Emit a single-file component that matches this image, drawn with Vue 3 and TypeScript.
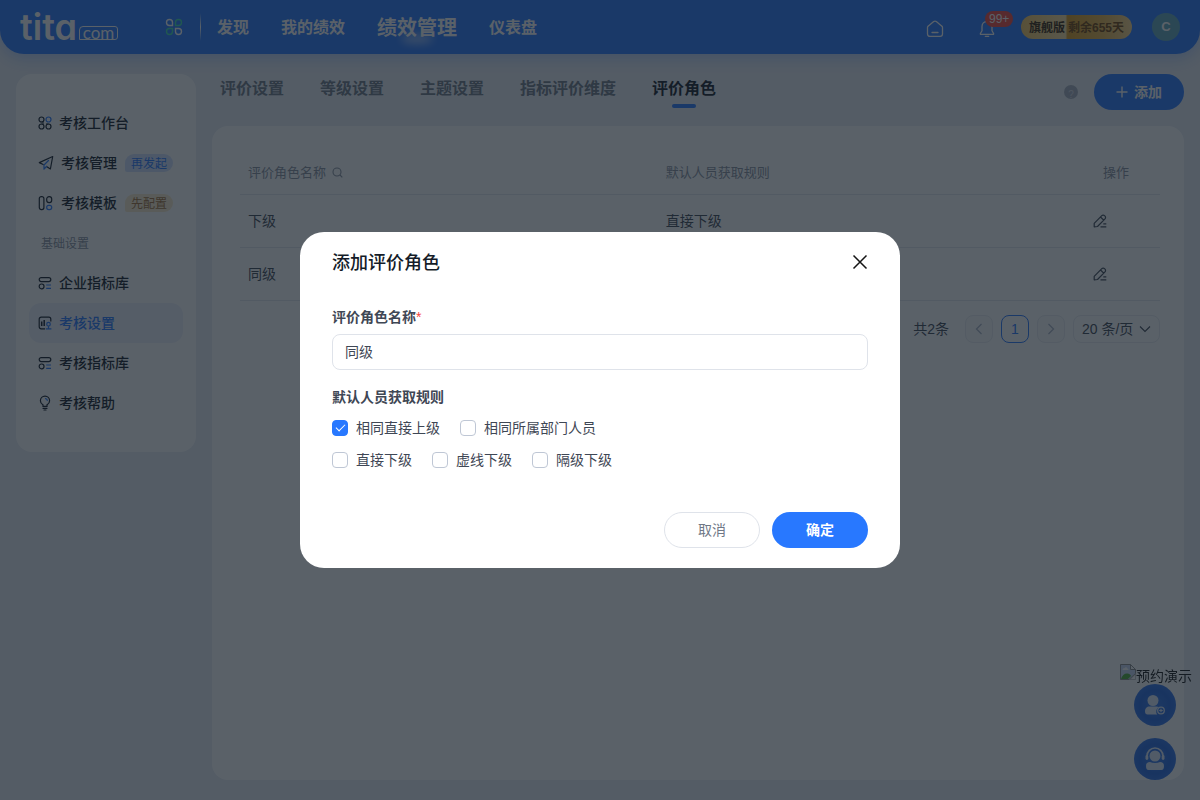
<script setup lang="ts">
import { ref } from 'vue'

interface MenuItem {
  label: string
  icon: string
  tag?: string
  tone?: string
  active?: boolean
}

const navLinks = ['发现', '我的绩效', '绩效管理', '仪表盘']
const activeNav = '绩效管理'

const topMenu: MenuItem[] = [
  { label: '考核工作台', icon: 'grid' },
  { label: '考核管理', icon: 'plane', tag: '再发起', tone: 'blue' },
  { label: '考核模板', icon: 'board', tag: '先配置', tone: 'gold' },
]
const baseMenu: MenuItem[] = [
  { label: '企业指标库', icon: 'library' },
  { label: '考核设置', icon: 'setting', active: true },
  { label: '考核指标库', icon: 'library' },
  { label: '考核帮助', icon: 'bulb' },
]

const tabs = ['评价设置', '等级设置', '主题设置', '指标评价维度', '评价角色']
const activeTab = ref('评价角色')

const rows = [
  { name: '下级', rule: '直接下级' },
  { name: '同级', rule: '' },
]

const roleName = ref('同级')
const ruleGroups = ref([
  [
    { label: '相同直接上级', checked: true },
    { label: '相同所属部门人员', checked: false },
  ],
  [
    { label: '直接下级', checked: false },
    { label: '虚线下级', checked: false },
    { label: '隔级下级', checked: false },
  ],
])
const pageSize = ref('20')
</script>

<template>
  <div class="page">
    <header class="header">
      <a class="logo" href="#" aria-label="tita.com"><span class="logo-name">tita</span><span class="logo-com">com</span></a>
      <button class="apps" type="button" aria-label="应用">
        <svg width="18" height="18" viewBox="0 0 18 18" fill="none" stroke-width="1.4">
          <path d="M4.5 1.5a3 3 0 0 0 0 6h3v-3A3 3 0 0 0 4.500 1.500Z" stroke="#fff" />
          <path d="M13.500 1.500a3 3 0 0 1 0 6h-3v-3A3 3 0 0 1 13.500 1.500Z" stroke="#3fe0b0" />
          <path d="M4.500 16.500a3 3 0 0 1 0-6h3v3A3 3 0 0 1 4.500 16.500Z" stroke="#3fe0b0" />
          <path d="M13.500 16.500a3 3 0 0 0 0-6h-3v3A3 3 0 0 0 13.500 16.500Z" stroke="#fff" />
        </svg>
      </button>
      <span class="divider"></span>
      <nav class="nav">
        <a v-for="n in navLinks" :key="n" href="#" :class="{ current: n === activeNav }">{{ n }}</a>
      </nav>
      <div class="tools">
        <button class="tool home" type="button" aria-label="首页">
          <svg width="18" height="18" viewBox="0 0 18 18" fill="none" stroke="#fff" stroke-width="1.3" stroke-linecap="round" stroke-linejoin="round">
            <path d="M1.500 7.600c0-.7.3-1.300.9-1.700l5.300-4.300c.8-.6 1.800-.6 2.600 0l5.300 4.300c.6.4.9 1 .9 1.700v6.400c0 1.400-1 2.400-2.400 2.400H3.900c-1.400 0-2.400-1-2.400-2.400Z" />
            <path d="M6 12.500h6" />
          </svg>
        </button>
        <button class="tool bell" type="button" aria-label="通知">
          <svg width="16" height="18" viewBox="0 0 16 18" fill="none" stroke="#fff" stroke-width="1.3" stroke-linecap="round" stroke-linejoin="round">
            <path d="M8 1.500c-3 0-5 2.200-5 5v4.200l-1.600 2.800c-.2.400 0 .8.500.8h12.200c.5 0 .7-.4.5-.8L13 10.700V6.500c0-2.800-2-5-5-5Z" />
            <path d="M6.300 16.300h3.400" />
          </svg>
          <span class="count">99+</span>
        </button>
        <div class="plan"><span>旗舰版</span><span class="left">剩余655天</span></div>
        <button class="avatar" type="button">C</button>
      </div>
    </header>

    <div class="body">
      <aside class="side">
        <nav>
          <template v-for="(group, gi) in [topMenu, baseMenu]" :key="gi">
            <p v-if="gi === 1" class="caption">基础设置</p>
            <a v-for="m in group" :key="m.label" href="#" class="item" :class="{ active: m.active }">
              <svg v-if="m.icon === 'grid'" width="14" height="14" viewBox="0 0 14 14" fill="none" stroke="#141c28" stroke-width="1.200">
                <circle cx="3.500" cy="3.500" r="2.500" />
                <circle cx="3.500" cy="10.500" r="2.500" />
                <circle cx="10.500" cy="10.500" r="2.500" />
                <path d="M3.500 6H6M3.500 8H6M8 8h2.500" />
                <circle cx="10.500" cy="3.500" r="2.500" stroke="#2878ff" />
              </svg>
              <svg v-else-if="m.icon === 'plane'" width="16" height="16" viewBox="0 0 16 16" fill="none" stroke="#141c28" stroke-width="1.200" stroke-linejoin="round" stroke-linecap="round">
                <path d="M5.200 9.500 1.300 7.600 14.700 1.500 12.400 14 8.500 11.500" />
                <path d="M10.500 5.500 6 10v4.200l2.500-2.700" stroke="#2878ff" />
              </svg>
              <svg v-else-if="m.icon === 'board'" width="16" height="16" viewBox="0 0 16 16" fill="none" stroke="#141c28" stroke-width="1.200">
                <rect x="1.300" y="1.600" width="4.600" height="13" rx="2" />
                <rect x="8.700" y="1.600" width="5" height="6" rx="2.400" />
                <rect x="8.700" y="10.300" width="5" height="4.300" rx="2" stroke="#2878ff" />
              </svg>
              <svg v-else-if="m.icon === 'library'" width="14" height="14" viewBox="0 0 14 14" fill="none" stroke="#141c28" stroke-width="1.200">
                <rect x="1.200" y="1.600" width="11.600" height="4" rx="2" />
                <rect x="1.200" y="8" width="4.800" height="4.800" rx="2.200" />
                <path d="M8.200 9H13M8.200 12.300H13" stroke="#2878ff" />
              </svg>
              <svg v-else-if="m.icon === 'setting'" width="14" height="14" viewBox="0 0 14 14" fill="none" stroke="#141c28" stroke-width="1.200">
                <path d="M7 12.800H3.200a2 2 0 0 1-2-2V3.200a2 2 0 0 1 2-2h7.600a2 2 0 0 1 2 2V5.500" />
                <path d="M3.700 5.500V10M6.200 4V10" stroke-width="1.500" />
                <circle cx="10.500" cy="8.200" r="1.800" stroke="#2878ff" />
                <path d="M10.500 10V12.700M7.800 12.900H13.400" stroke="#2878ff" />
              </svg>
              <svg v-else width="14" height="16" viewBox="0 0 14 16" fill="none" stroke="#141c28" stroke-width="1.200" stroke-linecap="round">
                <path d="M5 11.300V9.900C3.300 9 2.400 7.600 2.400 5.800a4.600 4.600 0 0 1 9.200 0C11.600 7.600 10.700 9 9 9.900v1.400ZM5 13.300h4M6 15h2" />
                <path d="M7.500 3.600c1 .1 1.700.8 1.800 1.800" stroke="#2878ff" />
              </svg>
              <span>{{ m.label }}</span>
              <em v-if="m.tag" :class="m.tone">{{ m.tag }}</em>
            </a>
          </template>
        </nav>
      </aside>

      <main class="main">
        <div class="bar">
          <div class="tabs" role="tablist">
            <button v-for="t in tabs" :key="t" type="button" role="tab" :aria-selected="t === activeTab" :class="{ on: t === activeTab }" @click="activeTab = t">{{ t }}</button>
          </div>
          <button class="help" type="button" aria-label="帮助">?</button>
          <button class="add" type="button">
            <svg width="12" height="12" viewBox="0 0 12 12" stroke="#fff" stroke-width="1.400"><path d="M6 0.500v11M0.500 6h11" /></svg>
            添加
          </button>
        </div>

        <section class="card">
          <table>
            <thead>
              <tr>
                <th class="c-name">
                  <div>
                    <span>评价角色名称</span>
                    <svg width="11" height="11" viewBox="0 0 11 11" fill="none" stroke="#89919f" stroke-width="1.100"><circle cx="5" cy="5" r="4" /><path d="m8 8 2.300 2.300" /></svg>
                  </div>
                </th>
                <th>默认人员获取规则</th>
                <th class="c-op">操作</th>
              </tr>
            </thead>
            <tbody>
              <tr v-for="r in rows" :key="r.name">
                <td>{{ r.name }}</td>
                <td>{{ r.rule }}</td>
                <td class="op">
                  <button type="button" aria-label="编辑">
                    <svg width="14" height="14" viewBox="0 0 14 14" fill="none" stroke="#3f4755" stroke-width="1.200" stroke-linejoin="round">
                      <path d="M1.200 12.800V9.300L8.800 1.700a1.900 1.900 0 0 1 2.700 0l.5.500a1.900 1.900 0 0 1 0 2.700L4.500 12.500ZM7.500 3l3.200 3.200M10.300 9.800H13.300M7.500 12.800H13.300" />
                    </svg>
                  </button>
                </td>
              </tr>
            </tbody>
          </table>
          <div class="pager">
            <span class="total">共2条</span>
            <button type="button" disabled aria-label="上一页"><svg width="12" height="12" viewBox="0 0 12 12" fill="none" stroke="#a9b2c2" stroke-width="1.200"><path d="M8.500 1 3.500 6l5 5" /></svg></button>
            <button type="button" class="cur">1</button>
            <button type="button" disabled aria-label="下一页"><svg width="12" height="12" viewBox="0 0 12 12" fill="none" stroke="#a9b2c2" stroke-width="1.200"><path d="m3.500 1 5 5-5 5" /></svg></button>
            <label class="size">
              <select v-model="pageSize" aria-label="每页条数"><option value="20">20 条/页</option><option value="50">50 条/页</option></select>
              <svg width="12" height="12" viewBox="0 0 12 12" fill="none" stroke="#3f4755" stroke-width="1.100"><path d="m1 3.500 5 5 5-5" /></svg>
            </label>
          </div>
        </section>
      </main>
    </div>

    <div class="float">
      <a class="demo" href="#">
        <svg width="16" height="16" viewBox="0 0 16 16">
          <path d="M.5.500h10l5 5v4L9 15.500H.5Z" fill="#c8d8f4" stroke="#8c8c8c" />
          <path d="M10.500.500v5h5Z" fill="#fff" stroke="#8c8c8c" />
          <path d="M2.500 6c0-1.500 1-2 2-1.800C5 3 7 3 7.200 4.500c1 0 1.300.7 1.300 1.500Z" fill="#fff" />
          <path d="M1 15c1-4 4-6 6.500-5.500 1.500.3 3 1.200 3.500 2.500l-3 3Z" fill="#4fae3a" />
          <path d="M15.500 10v5.500H10Z" fill="#fff" stroke="#a0a0a0" stroke-width=".6" />
        </svg><span>预约演示</span>
      </a>
      <button type="button" aria-label="预约顾问">
        <svg width="22" height="22" viewBox="0 0 22 22" fill="#fff">
          <circle cx="9" cy="6.500" r="5.500" />
          <path d="M1 17.500c0-3.500 2-5 4.500-5h7c.9 0 1.700.2 2.400.6a4.800 4.800 0 0 0-1.600 7.400H3.500C2 20.500 1 19.500 1 17.500Z" />
          <circle cx="17" cy="16.500" r="3.300" fill="none" stroke="#fff" stroke-width="1.300" />
          <path d="M17 14.700v3.600M15.200 16.500h3.600" stroke="#fff" stroke-width="1.200" />
        </svg>
      </button>
      <button type="button" aria-label="在线客服">
        <svg width="22" height="24" viewBox="0 0 22 24" fill="#fff">
          <circle cx="11" cy="9" r="5.500" />
          <path d="M3 10.500V9a8 8 0 0 1 16 0v1.500" fill="none" stroke="#fff" stroke-width="1.700" />
          <rect x="1.500" y="8" width="2.800" height="5" rx="1.400" />
          <rect x="17.700" y="8" width="2.800" height="5" rx="1.400" />
          <path d="M2 19c0-3 1.500-4 4-4 3 1.300 7 1.300 10 0 2.500 0 4 1 4 4 0 2.500-.8 4-2.500 4h-13C2.800 23 2 21.500 2 19Z" />
        </svg>
      </button>
    </div>

    <div class="mask">
      <form class="modal" role="dialog" aria-modal="true" aria-labelledby="dlg-title" @submit.prevent>
        <div class="modal-head">
          <h2 id="dlg-title">添加评价角色</h2>
          <button type="button" class="close" aria-label="关闭">
            <svg width="16" height="16" viewBox="0 0 16 16" stroke="#141414" stroke-width="1.500"><path d="m1.500 1.500 13 13M14.500 1.500l-13 13" /></svg>
          </button>
        </div>
        <label class="field" for="role-name">评价角色名称<i>*</i></label>
        <input id="role-name" v-model="roleName" class="text" type="text" />
        <fieldset>
          <legend class="field">默认人员获取规则</legend>
          <div v-for="(g, i) in ruleGroups" :key="i" class="checks">
            <label v-for="o in g" :key="o.label"><input v-model="o.checked" type="checkbox" /><span>{{ o.label }}</span></label>
          </div>
        </fieldset>
        <div class="foot">
          <button type="button" class="cancel">取消</button>
          <button type="submit" class="ok">确定</button>
        </div>
      </form>
    </div>
  </div>
</template>

<style>
body {
  margin: 0;
}
</style>

<style scoped>
.page,
.page button,
.page input,
.page select {
  font-family: 'Liberation Sans', 'Noto Sans CJK SC', sans-serif;
  line-height: 20px;
}
.page {
  min-height: 100vh;
  display: flex;
  flex-direction: column;
  background: #ebeef6;
  color: #3f4755;
  font-size: 14px;
}
.page *,
.page *::before,
.page *::after {
  box-sizing: border-box;
}
a {
  color: inherit;
  text-decoration: none;
}
button {
  padding: 0;
  border: 0;
  background: none;
  color: inherit;
  font-size: 14px;
  cursor: pointer;
}
svg {
  display: block;
  flex: none;
}

.header {
  display: flex;
  align-items: center;
  height: 54px;
  padding: 0 20px;
  border-radius: 0 0 24px 24px;
  background: #2878ff;
  box-shadow: 0 4px 16px rgba(40, 120, 255, 0.3);
  color: #fff;
}
.logo {
  display: flex;
  align-items: flex-end;
  gap: 2px;
  width: 98px;
}
.logo-name {
  font: 600 36px/32px Inter, sans-serif;
  font-feature-settings: 'cv11';
}
.logo-com {
  display: flex;
  flex: 1;
  align-items: center;
  justify-content: center;
  height: 14px;
  margin-bottom: 3px;
  border: 1px solid #fff;
  border-radius: 4px 3px 3px 0;
  font: 400 17px/12px Lato, sans-serif;
}
.apps {
  margin-left: 47px;
}
.divider {
  width: 1px;
  height: 28px;
  margin: 0 16px 0 17px;
  background: linear-gradient(rgba(255, 255, 255, 0), #fff, rgba(255, 255, 255, 0));
}
.nav {
  display: flex;
  align-items: center;
  gap: 32px;
  padding-top: 2px;
  font-size: 16px;
  font-weight: 700;
  white-space: nowrap;
}
.nav .current {
  position: relative;
  font-size: 20px;
}
.nav .current::after {
  content: '';
  position: absolute;
  left: 24px;
  bottom: -6px;
  width: 32px;
  height: 10px;
  border-radius: 50%;
  background: rgba(255, 255, 255, 0.5);
  filter: blur(4px);
}
.tools {
  display: flex;
  align-items: center;
  margin-left: auto;
}
.home {
  margin: 4px 35px 0 0;
}
.bell {
  position: relative;
  margin: 4px 26px 0 0;
}
.count {
  position: absolute;
  left: 6px;
  top: -9px;
  padding: 0 4px;
  border-radius: 8px;
  background: #f5463d;
  font-size: 12px;
  line-height: 16px;
}
.plan {
  display: flex;
  align-items: center;
  height: 24px;
  padding: 2px 8px 0;
  border-radius: 12px;
  background: linear-gradient(90deg, #f6c65f, #fbdfa0 40%, #dc9a1c 42%, #e8b44c 75%, #fbd58a);
  color: #3a260a;
  font-size: 12px;
  font-weight: 700;
  gap: 3px;
}
.plan .left {
  color: #74440a;
}
.avatar {
  width: 28px;
  height: 28px;
  margin-left: 20px;
  border-radius: 50%;
  background: #63a9bd;
  font-size: 13px;
  font-weight: 700;
}

.body {
  flex: 1;
  display: flex;
  align-items: stretch;
  gap: 16px;
  padding: 20px 16px;
}
.side {
  flex: none;
  align-self: flex-start;
  width: 180px;
  padding: 29px 13px;
  border-radius: 16px;
  background: #fff;
}
.side nav {
  display: flex;
  flex-direction: column;
}
.item {
  display: flex;
  align-items: center;
  gap: 7px;
  height: 40px;
  padding: 0 10px 0 9px;
  border-radius: 12px;
  color: #141c28;
  font-weight: 500;
  white-space: nowrap;
}
.item.active {
  background: #eef0fb;
  color: #2878ff;
}
.item em {
  height: 18px;
  margin-left: auto;
  padding: 0 6px;
  border-radius: 9px 9px 9px 2px;
  font-size: 12px;
  font-style: normal;
  font-weight: 400;
  line-height: 20px;
}
.blue {
  background: #d3e2ff;
  color: #2878ff;
}
.gold {
  background: #fbeccb;
  color: #a3703a;
}
.caption {
  margin: 0;
  padding: 11px 0 9px 12px;
  color: #89919f;
  font-size: 12px;
}

.main {
  flex: 1;
  min-width: 0;
  display: flex;
  flex-direction: column;
  gap: 16px;
}
.bar {
  display: flex;
  align-items: center;
  height: 36px;
  padding-left: 8px;
}
.tabs {
  display: flex;
  align-self: flex-start;
  gap: 36px;
}
.tabs button {
  position: relative;
  height: 28px;
  padding-top: 2px;
  color: #6f7886;
  font-size: 16px;
  font-weight: 700;
  white-space: nowrap;
}
.tabs .on {
  color: #141c28;
}
.tabs .on::after {
  content: '';
  position: absolute;
  left: 20px;
  bottom: -6px;
  width: 24px;
  height: 4px;
  border-radius: 2px;
  background: #2878ff;
}
.help {
  width: 14px;
  height: 14px;
  margin: 0 16px 0 auto;
  border-radius: 50%;
  background: #a9b0bf;
  color: #d5d9e2;
  font-size: 10px;
  line-height: 14px;
}
.add {
  display: flex;
  align-items: center;
  justify-content: center;
  gap: 6px;
  width: 90px;
  height: 36px;
  border-radius: 18px;
  background: #2878ff;
  color: #fff;
  font-weight: 700;
}

.card {
  flex: 1;
  padding: 24px 24px 24px 28px;
  border-radius: 16px;
  background: #fff;
}
table {
  width: 100%;
  border-collapse: collapse;
  table-layout: fixed;
}
th,
td {
  padding: 0 8px;
  border-bottom: 1px solid #e3e7ee;
  text-align: left;
  font-weight: 400;
}
th {
  height: 44px;
  padding-top: 2px;
  color: #89919f;
  font-size: 13px;
}
td {
  height: 53px;
}
.c-name {
  width: 45.4%;
}
.c-name div {
  display: flex;
  align-items: center;
  gap: 6px;
}
.c-op {
  width: 75px;
  padding-left: 18px;
}
.op button {
  display: block;
}
.pager {
  display: flex;
  align-items: center;
  justify-content: flex-end;
  gap: 8px;
  margin-top: 14px;
}
.total {
  margin-right: 8px;
}
.pager button {
  display: flex;
  align-items: center;
  justify-content: center;
  width: 28px;
  height: 28px;
  border: 1px solid #e9ecf0;
  border-radius: 8px;
}
.pager button:disabled {
  background: #fafafc;
}
.pager .cur {
  border-color: #2878ff;
  color: #2878ff;
}
.size {
  display: flex;
  align-items: center;
  height: 28px;
  padding: 0 8px;
  border: 1px solid #e9ecf0;
  border-radius: 8px;
}
select {
  width: 57px;
  padding: 0;
  border: 0;
  appearance: none;
  background: none;
  color: #3f4755;
  font-size: 14px;
}

.float {
  position: fixed;
  right: 8px;
  bottom: 20px;
  display: flex;
  flex-direction: column;
  align-items: flex-end;
  gap: 12px;
}
.demo {
  display: flex;
  height: 20px;
  margin-bottom: -12px;
  color: #141414;
}
.demo span {
  padding-top: 2px;
}
.float button {
  display: flex;
  align-items: center;
  justify-content: center;
  width: 42px;
  height: 42px;
  margin-right: 16px;
  border-radius: 50%;
  background: radial-gradient(#2f74ea 20%, #2468e4 50%, #3f83f5);
}
.float button svg {
  opacity: 0.85;
}

.mask {
  position: fixed;
  inset: 0;
  display: flex;
  align-items: center;
  justify-content: center;
  background: rgba(20, 30, 40, 0.7);
}
.modal {
  width: 600px;
  max-width: 100%;
  padding: 16px 32px 20px;
  border-radius: 24px;
  background: #fff;
}
.modal-head {
  display: flex;
  align-items: center;
  justify-content: space-between;
  height: 28px;
  margin-bottom: 30px;
}
h2 {
  margin: 0;
  padding-top: 2px;
  color: #141c28;
  font-size: 18px;
  font-weight: 500;
}
.field {
  display: block;
  height: 22px;
  padding: 0;
  font-weight: 700;
  line-height: 22px;
}
.field i {
  color: #f5463d;
  font-style: normal;
  font-weight: 400;
}
.text {
  display: block;
  width: 100%;
  height: 36px;
  margin: 6px 0 16px;
  padding: 0 12px 2px;
  border: 1px solid #dfe3ea;
  border-radius: 8px;
  outline: 0;
  color: #3f4755;
  font-size: 14px;
}
fieldset {
  margin: 0;
  padding: 0;
  border: 0;
}
.checks {
  display: flex;
  gap: 20px;
  padding-bottom: 12px;
}
legend {
  margin-bottom: 10px;
}
.checks label {
  display: flex;
  align-items: center;
  gap: 8px;
  height: 20px;
}
.checks input {
  display: flex;
  justify-content: center;
  width: 16px;
  height: 16px;
  margin: 0;
  border: 1px solid #bfc7d5;
  border-radius: 4px;
  appearance: none;
}
.checks input:checked {
  border-color: #2878ff;
  background: #2878ff;
}
.checks input:checked::after {
  content: '';
  width: 9px;
  height: 5px;
  margin-top: 3px;
  border: solid #fff;
  border-width: 0 0 1px 1px;
  transform: rotate(-45deg);
}
.foot {
  display: flex;
  justify-content: flex-end;
  gap: 12px;
  margin-top: 30px;
}
.foot button {
  width: 96px;
  height: 36px;
  border-radius: 18px;
}
.foot .cancel {
  border: 1px solid #dfe3ea;
  color: #6f7886;
}
.foot .ok {
  background: #2878ff;
  color: #fff;
  font-weight: 700;
}
</style>
